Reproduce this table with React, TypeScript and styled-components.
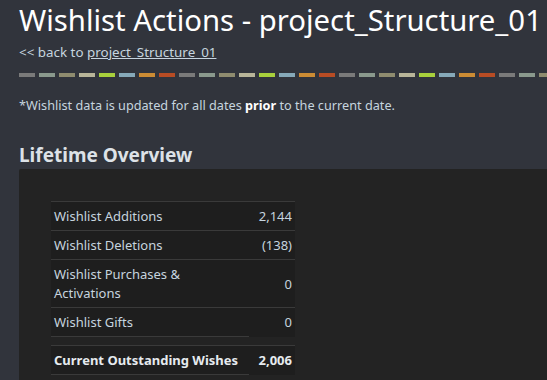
import styled, { createGlobalStyle } from "styled-components";

const GlobalStyle = createGlobalStyle`
  body {
    margin: 0;
    background: #31343c;
    font-family: "Noto Sans", "Open Sans", Arial, sans-serif;
    color: #c6d4df;
    overflow: hidden;
  }
`;

const dashColors = [
  "#7a7a7a",
  "#8a998d",
  "#8f8c6f",
  "#b8b599",
  "#a8d03c",
  "#86a9b9",
  "#cc8c34",
  "#b84c24",
];

const rows: { label: string; value: string; short?: boolean }[] = [
  { label: "Wishlist Additions", value: "2,144" },
  { label: "Wishlist Deletions", value: "(138)" },
  { label: "Wishlist Purchases & Activations", value: "0" },
  { label: "Wishlist Gifts", value: "0", short: true },
];

export default function App() {
  return (
    <Page>
      <GlobalStyle />
      <Title>Wishlist Actions - project_Structure_01</Title>
      <Back>
        &lt;&lt; back to <a href="#">project_Structure_01</a>
      </Back>
      <Dashes>
        {Array.from({ length: 27 }, (_, i) => (
          <Dash key={i} $color={dashColors[i % dashColors.length]} />
        ))}
      </Dashes>
      <Note>
        *Wishlist data is updated for all dates <b>prior</b> to the current
        date.
      </Note>
      <Heading>Lifetime Overview</Heading>
      <Panel>
        <Table>
          <tbody>
            {rows.map((r) => (
              <Row key={r.label} $short={r.short}>
                <Label>{r.label}</Label>
                <Value>{r.value}</Value>
              </Row>
            ))}
            <Spacer>
              <td colSpan={2} />
            </Spacer>
            <Row $short $total>
              <Label>Current Outstanding Wishes</Label>
              <Value>2,006</Value>
            </Row>
          </tbody>
        </Table>
      </Panel>
    </Page>
  );
}

const Page = styled.div`
  padding: 0 0 0 19px;
  height: 380px;
  display: flex;
  flex-direction: column;
`;

const Title = styled.h1`
  margin: 0;
  padding-top: 1px;
  font-size: 29.3px;
  font-weight: normal;
  line-height: 38px;
  color: #ffffff;
  white-space: nowrap;
`;

const Back = styled.div`
  margin-top: 4px;
  font-size: 13.4px;
  line-height: 18px;

  a {
    color: #c6d4df;
    text-decoration: underline;
  }
`;

const Dashes = styled.div`
  display: flex;
  gap: 4px;
  margin-top: 12px;
  overflow: hidden;
`;

const Dash = styled.span<{ $color: string }>`
  flex: none;
  width: 16px;
  height: 4px;
  background: ${(p) => p.$color};
`;

const Note = styled.p`
  margin: 19px 0 0;
  font-size: 12.7px;
  line-height: 18px;

  b {
    color: #ffffff;
  }
`;

const Heading = styled.h2`
  margin: 29px 0 0;
  font-size: 19px;
  line-height: 24px;
  color: #dde2e7;
`;

const Panel = styled.div`
  flex: 1;
  margin-top: 2px;
  background: #232323;
  border-top-left-radius: 2px;
  padding: 32px 0 0 32px;
`;

const Table = styled.table`
  border-collapse: collapse;
  width: 244px;
  font-size: 13px;
`;

const Row = styled.tr<{ $short?: boolean; $total?: boolean }>`
  background: #1e1e1e;
  font-weight: ${(p) => (p.$total ? "bold" : "normal")};
  color: ${(p) => (p.$total ? "#e6ebef" : "#c6d4df")};

  td {
    border-top: 1px solid #3a3a3a;
    border-bottom: 1px solid #3a3a3a;
    height: 18px;
    padding: 5px 3px 4px;
    line-height: 19px;
  }

  td:last-child {
    border-bottom-color: ${(p) => (p.$short ? "transparent" : "#3a3a3a")};
  }
`;

const Spacer = styled.tr`
  td {
    height: 8px;
    padding: 0;
  }
`;

const Label = styled.td`
  text-align: left;
`;

const Value = styled.td`
  text-align: right;
  width: 40px;
  padding-right: 5px;
`;
